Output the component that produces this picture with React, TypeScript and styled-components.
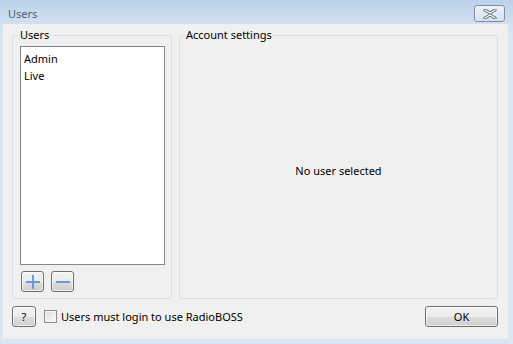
import styled, { createGlobalStyle } from "styled-components";

const GlobalStyle = createGlobalStyle`
  html, body {
    margin: 0;
    padding: 0;
    background: #d9e5f2;
  }
  * {
    box-sizing: border-box;
  }
`;

export default function App() {
  return (
    <>
      <GlobalStyle />
      <Window>
        <TitleBar>
          <Title>Users</Title>
          <CloseButton>
            <svg width="16" height="10" viewBox="0 0 16 10">
              <path
                d="M3 1 L8 4 L13 1 M3 9 L8 6 L13 9"
                stroke="#5a6a80"
                strokeWidth="3.2"
                fill="none"
                strokeLinecap="round"
              />
              <path
                d="M3 1 L8 4 L13 1 M3 9 L8 6 L13 9"
                stroke="#ffffff"
                strokeWidth="1.4"
                fill="none"
                strokeLinecap="round"
              />
            </svg>
          </CloseButton>
        </TitleBar>
        <Client>
          <Groups>
            <UsersGroup>
              <Legend>Users</Legend>
              <ListBox>
                <ListItem>Admin</ListItem>
                <ListItem>Live</ListItem>
              </ListBox>
              <ListButtons>
                <IconButton>
                  <svg width="14" height="14" viewBox="0 0 14 14">
                    <path d="M7 0 V14 M0 7 H14" stroke="#6a9ad6" strokeWidth="2" />
                  </svg>
                </IconButton>
                <IconButton>
                  <svg width="14" height="14" viewBox="0 0 14 14">
                    <path d="M0 7 H14" stroke="#6a9ad6" strokeWidth="2" />
                  </svg>
                </IconButton>
              </ListButtons>
            </UsersGroup>
            <SettingsGroup>
              <Legend>Account settings</Legend>
              <EmptyText>No user selected</EmptyText>
            </SettingsGroup>
          </Groups>
          <BottomRow>
            <HelpButton>?</HelpButton>
            <CheckLabel>
              <CheckBox />
              Users must login to use RadioBOSS
            </CheckLabel>
            <OkButton>OK</OkButton>
          </BottomRow>
        </Client>
      </Window>
    </>
  );
}

const Window = styled.div`
  width: 513px;
  height: 344px;
  display: flex;
  flex-direction: column;
  background: linear-gradient(to bottom, #bcd2ea 0px, #d3e1f1 25px, #dae6f3 40px, #dae6f3 100%);
  font-family: "Noto Sans", "DejaVu Sans", sans-serif;
  font-size: 11px;
  color: #000;
`;

const TitleBar = styled.div`
  height: 25px;
  display: flex;
  align-items: flex-start;
  justify-content: space-between;
  padding: 0 8px 0 8px;
`;

const Title = styled.div`
  font-size: 11px;
  line-height: 14px;
  padding-top: 7px;
  color: #4a5d78;
`;

const CloseButton = styled.div`
  width: 31px;
  height: 17px;
  margin-top: 5px;
  border: 1px solid #7e8ea4;
  border-radius: 3px;
  background: linear-gradient(to bottom, #eef3f9, #d6e1ee);
  display: flex;
  align-items: center;
  justify-content: center;
`;

const Client = styled.div`
  flex: 1;
  margin: 0 5px 5px 3px;
  background: #f0f0f0;
  display: flex;
  flex-direction: column;
  padding: 3px 10px 12px 9px;
`;

const Groups = styled.div`
  display: flex;
  gap: 7px;
  height: 272px;
`;

const Group = styled.fieldset`
  margin: 0;
  border: 1px solid #d5dfe5;
  border-radius: 3px;
  min-width: 0;
  display: flex;
  flex-direction: column;
`;

const UsersGroup = styled(Group)`
  width: 160px;
  padding: 3px 6px 6px 7px;
`;

const SettingsGroup = styled(Group)`
  flex: 1;
  padding: 0 6px;
  align-items: center;
  justify-content: center;
`;

const Legend = styled.legend`
  padding: 0;
  margin: 0;
  line-height: 16px;
  font-size: 11px;
`;

const ListBox = styled.div`
  height: 219px;
  flex-shrink: 0;
  border: 1px solid #828790;
  background: #ffffff;
  padding: 3px 3px;
`;

const ListItem = styled.div`
  line-height: 17px;
`;

const ListButtons = styled.div`
  display: flex;
  gap: 7px;
  margin-top: 6px;
  padding-left: 1px;
`;

const Btn = styled.div`
  border: 1px solid #707070;
  border-radius: 3px;
  background: linear-gradient(to bottom, #f2f2f2 0%, #ebebeb 50%, #dddddd 51%, #cfcfcf 100%);
  display: flex;
  align-items: center;
  justify-content: center;
  box-shadow: inset 0 0 0 1px rgba(255, 255, 255, 0.6);
`;

const IconButton = styled(Btn)`
  width: 23px;
  height: 21px;
`;

const EmptyText = styled.div`
  margin-top: 0;
`;

const BottomRow = styled.div`
  display: flex;
  align-items: center;
  margin-top: 7px;
  height: 21px;
`;

const HelpButton = styled(Btn)`
  width: 24px;
  height: 21px;
`;

const CheckLabel = styled.label`
  display: flex;
  align-items: center;
  gap: 4px;
  margin-left: 8px;
  flex: 1;
`;

const CheckBox = styled.span`
  width: 13px;
  height: 13px;
  border: 1px solid #8e8f8f;
  background: linear-gradient(135deg, #dcdcdc, #fbfbfb);
  box-shadow: inset 0 0 0 1px #f4f4f4;
`;

const OkButton = styled(Btn)`
  width: 73px;
  height: 21px;
`;
